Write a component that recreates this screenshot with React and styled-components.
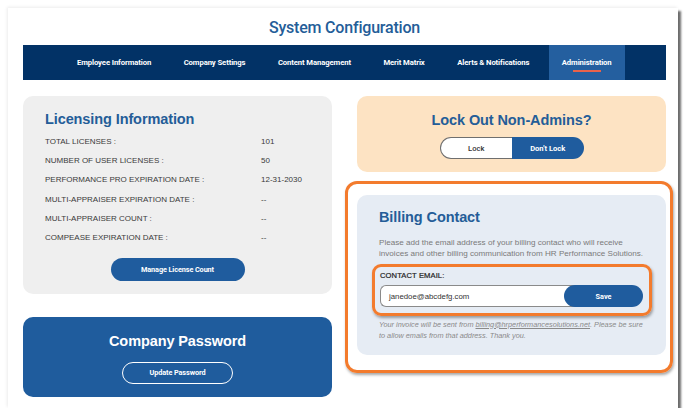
import React from "react";
import styled, { createGlobalStyle } from "styled-components";

const Global = createGlobalStyle`
  html, body { margin: 0; padding: 0; background: #ffffff; }
  body { font-family: "Liberation Sans", Arial, sans-serif; }
  * { box-sizing: border-box; }
`;

const BLUE = "#245d98";
const BTN = "#1f5c9e";
const ORANGE = "#f37b2d";

const Frame = styled.div`
  margin: 8px 0 0 8px;
  width: 670px;
  height: 400px;
  background: #fff;
  box-shadow: 3px 3px 2px rgba(60, 60, 60, 0.75), -1px -1px 3px rgba(0, 0, 0, 0.08);
  padding: 0 12px 0 15px;
`;

const PageTitle = styled.h1`
  margin: 0;
  height: 37px;
  display: flex;
  align-items: center;
  justify-content: center;
  font-family: Roboto, "Liberation Sans", sans-serif;
  font-weight: 500;
  font-size: 16px;
  color: ${BLUE};
  letter-spacing: -0.2px;
  padding-top: 1px;
`;

const Nav = styled.nav`
  height: 35px;
  background: #023266;
  display: flex;
  align-items: stretch;
  padding-left: 41px;
  gap: 6.5px;
`;

const NavItem = styled.div`
  position: relative;
  display: flex;
  align-items: center;
  padding: 0 13px;
  font-family: Roboto, "Liberation Sans", sans-serif;
  font-weight: 700;
  font-size: 7.7px;
  color: #fff;
  letter-spacing: -0.1px;
  background: ${(p) => (p.$active ? "#245f9f" : "transparent")};
  ${(p) =>
    p.$active &&
    `&::after {
      content: "";
      position: absolute;
      left: 50%;
      transform: translateX(-50%);
      bottom: 8px;
      width: 28px;
      height: 2px;
      background: #e8624a;
    }`}
`;

const Columns = styled.div`
  display: grid;
  grid-template-columns: 309px 309px;
  column-gap: 25px;
  margin-top: 16px;
  align-items: start;
`;

const Column = styled.div`
  display: flex;
  flex-direction: column;
  gap: ${(p) => p.$gap || "0"};
`;

const Card = styled.section`
  border-radius: 10px;
  background: ${(p) => p.$bg};
  padding: ${(p) => p.$pad};
  display: flex;
  flex-direction: column;
  align-items: ${(p) => (p.$center ? "center" : "stretch")};
`;

const CardTitle = styled.h2`
  margin: 0;
  font-family: "Liberation Sans", Arial, sans-serif;
  font-weight: 700;
  font-size: ${(p) => p.$size || "14.5px"};
  line-height: 20px;
  color: ${(p) => p.$color || BLUE};
  letter-spacing: -0.1px;
`;

const InfoTable = styled.div`
  margin-top: 3px;
  display: grid;
  grid-template-columns: 216px 1fr;
  grid-auto-rows: 19.2px;
  align-items: center;
  font-size: 8px;
  color: #3a3a3a;
`;

const PillButton = styled.button`
  display: flex;
  align-items: center;
  justify-content: center;
  height: ${(p) => p.$h || "23px"};
  width: ${(p) => p.$w};
  border-radius: 12px;
  border: ${(p) => (p.$outline ? "1px solid #fff" : "none")};
  background: ${(p) => (p.$outline ? "transparent" : BTN)};
  color: #fff;
  font-family: Roboto, "Liberation Sans", sans-serif;
  font-weight: 700;
  font-size: 7.3px;
  letter-spacing: -0.1px;
  padding: 0;
  margin-top: ${(p) => p.$mt || "0"};
  align-self: center;
`;

const Segmented = styled.div`
  display: flex;
  margin-top: 7px;
  width: 144px;
  height: 22px;
`;

const Segment = styled.div`
  flex: 1;
  display: flex;
  align-items: center;
  justify-content: center;
  font-family: Roboto, "Liberation Sans", sans-serif;
  font-size: 7.6px;
  font-weight: ${(p) => (p.$on ? 700 : 500)};
  color: ${(p) => (p.$on ? "#fff" : "#333")};
  background: ${(p) => (p.$on ? BTN : "#fff")};
  border: ${(p) => (p.$on ? "none" : "1px solid #6f6f6f")};
  border-right: none;
  border-radius: ${(p) => (p.$on ? "0 11px 11px 0" : "11px 0 0 11px")};
`;

const Highlight = styled.div`
  border: 3px solid ${ORANGE};
  border-radius: ${(p) => p.$r || "12px"};
  box-shadow: 1px 2px 3px rgba(0, 0, 0, 0.35);
  padding: ${(p) => p.$pad};
  margin: ${(p) => p.$m};
`;

const Description = styled.p`
  margin: 10px 0 0;
  max-width: 265px;
  font-size: 8.1px;
  line-height: 11px;
  color: #7a7a7a;
`;

const FieldLabel = styled.label`
  display: block;
  font-size: 7.6px;
  line-height: 10px;
  font-weight: 400;
  color: #222;
  letter-spacing: 0.1px;
  -webkit-text-stroke: 0.2px #222;
`;

const InputGroup = styled.div`
  display: flex;
  margin-top: 4px;
  height: 22px;
`;

const EmailInput = styled.div`
  flex: 1;
  display: flex;
  align-items: center;
  padding-left: 8px;
  background: #fff;
  border: 1px solid #8a8a8a;
  border-right: none;
  border-radius: 6px 0 0 6px;
  font-size: 7.8px;
  color: #333;
  margin-right: -12px;
`;

const SaveButton = styled.button`
  position: relative;
  width: 79px;
  height: 22px;
  border: none;
  border-radius: 11px;
  background: ${BTN};
  color: #fff;
  font-family: Roboto, "Liberation Sans", sans-serif;
  font-weight: 700;
  font-size: 7.3px;
  padding: 0;
`;

const Note = styled.div`
  margin: 2.5px 0 0;
  font-size: 7.3px;
  line-height: 11px;
  font-style: italic;
  color: #8a8a8a;
`;

const NoteLine = styled.div`
  display: flex;
  white-space: nowrap;
`;

const NoteLink = styled.span`
  text-decoration: underline;
  margin-left: 2px;
`;

const navItems = [
  "Employee Information",
  "Company Settings",
  "Content Management",
  "Merit Matrix",
  "Alerts & Notifications",
  "Administration",
];

const rows = [
  ["TOTAL LICENSES :", "101"],
  ["NUMBER OF USER LICENSES :", "50"],
  ["PERFORMANCE PRO EXPIRATION DATE :", "12-31-2030"],
  ["MULTI-APPRAISER EXPIRATION DATE :", "--"],
  ["MULTI-APPRAISER COUNT :", "--"],
  ["COMPEASE EXPIRATION DATE :", "--"],
];

export default function App() {
  return (
    <>
      <Global />
      <Frame>
        <PageTitle>System Configuration</PageTitle>
        <Nav>
          {navItems.map((n) => (
            <NavItem key={n} $active={n === "Administration"}>
              {n}
            </NavItem>
          ))}
        </Nav>
        <Columns>
          <Column $gap="23px">
            <Card $bg="#efefef" $pad="13px 22px 13px 22px">
              <CardTitle>Licensing Information</CardTitle>
              <InfoTable>
                {rows.map(([k, v]) => (
                  <React.Fragment key={k}>
                    <span>{k}</span>
                    <span>{v}</span>
                  </React.Fragment>
                ))}
              </InfoTable>
              <PillButton $w="134px" $mt="10.5px">
                Manage License Count
              </PillButton>
            </Card>
            <Card $bg="#1f5c9d" $pad="14px 22px 13px" $center>
              <CardTitle $color="#fff">Company Password</CardTitle>
              <PillButton $outline $w="111px" $h="22px" $mt="11px">
                Update Password
              </PillButton>
            </Card>
          </Column>
          <Column>
            <Card $bg="#fde3c3" $pad="14px 22px 13px" $center>
              <CardTitle>Lock Out Non-Admins?</CardTitle>
              <Segmented>
                <Segment>Lock</Segment>
                <Segment $on>Don't Lock</Segment>
              </Segmented>
            </Card>
            <Highlight $pad="11px 4px 15px 9px" $m="9px -7px 0 -12px">
              <Card $bg="#e6ecf4" $pad="12px 22px 14px 22px">
                <CardTitle>Billing Contact</CardTitle>
                <Description>
                  Please add the email address of your billing contact who will receive
                  invoices and other billing communication from HR Performance Solutions.
                </Description>
                <Highlight $r="9px" $pad="4px 6px 6px 5px" $m="5px -8px 0 -7px">
                  <FieldLabel>CONTACT EMAIL:</FieldLabel>
                  <InputGroup>
                    <EmailInput>janedoe@abcdefg.com</EmailInput>
                    <SaveButton>Save</SaveButton>
                  </InputGroup>
                </Highlight>
                <Note>
                  <NoteLine>
                    <span>Your invoice will be sent from</span>
                    <NoteLink>billing@hrperformancesolutions.net</NoteLink>
                    <span>. Please be sure</span>
                  </NoteLine>
                  <NoteLine>to allow emails from that address. Thank you.</NoteLine>
                </Note>
              </Card>
            </Highlight>
          </Column>
        </Columns>
      </Frame>
    </>
  );
}
